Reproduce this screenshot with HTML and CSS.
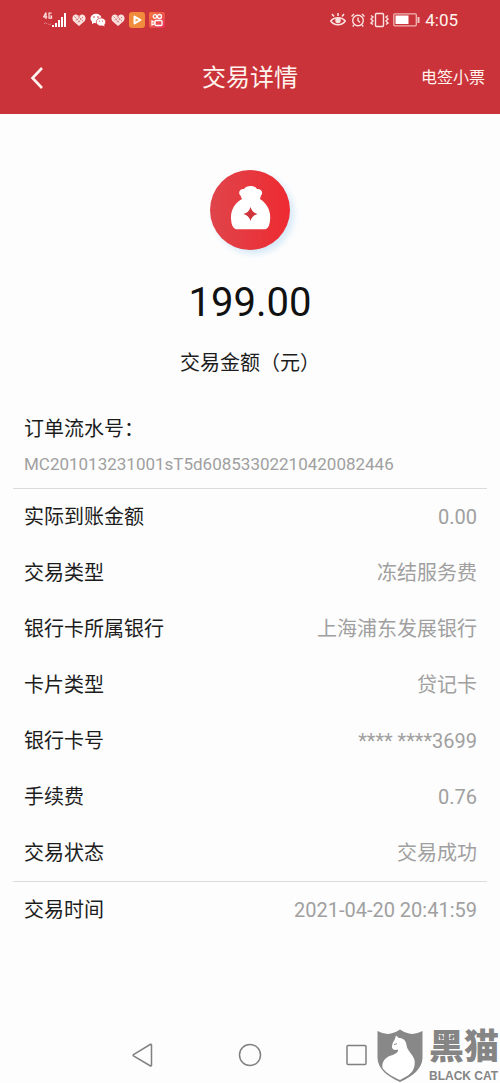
FILE: index.html
```html
<!DOCTYPE html>
<html lang="zh-CN">
<head>
<meta charset="utf-8">
<meta name="viewport" content="width=device-width, initial-scale=1">
<title>交易详情</title>
<link rel="stylesheet" href="styles.css">
</head>
<body>
<div class="screen">
  <header class="top">
    <div class="status">
      <div class="status-left">
        <svg width="24" height="16" viewBox="0 0 24 16" aria-hidden="true">
          <g fill="none" stroke="#fbe3e0" stroke-width="1.200"><path d="M3 .5v6.500M3 .5L.7 4.800H4.200M8.500 1.200H6v5h2.500V4H7.200"/><path d="M1 12l1.500-1.500L4 12M5 11.500L6.500 13 8 11.500" stroke="#e07f80" stroke-width="1"/></g>
          <g fill="#fff"><path d="M9 13h2v2H9zM12 11h2v4h-2zM15 8h2v7h-2zM18 5h2v10h-2zM21 1h2v14h-2z"/></g>
        </svg>
        <svg class="heart" width="14" height="14" viewBox="0 0 14 14" aria-hidden="true"><path d="M7 13L1.200 8C-.8 4.500 1.500 1 4.500 1.500L7 3 9.500 1.500C12.500 1 14.800 4.500 12.800 8z" fill="#fae3df"/><path d="M2.500 3.500l6 6.500M6 3.200l5 5M8 3.500L3.500 8M11 4L5.500 10" stroke="#c4545a" stroke-width=".8" stroke-dasharray="1.800 1" fill="none"/></svg>
        <svg width="16" height="14" viewBox="0 0 16 14" aria-hidden="true"><g fill="#fff"><ellipse cx="6" cy="5.500" rx="5.500" ry="4.700"/><path d="M2 8l0 3 3-1.500z"/><ellipse cx="11" cy="9" rx="4.700" ry="4" stroke="#cb333b" stroke-width=".7"/><path d="M12 12l2.500 1.500-.3-2.500z"/></g><g fill="#cb333b"><circle cx="4" cy="4" r=".8"/><circle cx="8" cy="4" r=".8"/><circle cx="9.500" cy="8" r=".6"/><circle cx="12.500" cy="8" r=".6"/></g></svg>
        <svg class="heart" width="14" height="14" viewBox="0 0 14 14" aria-hidden="true"><path d="M7 13L1.200 8C-.8 4.500 1.500 1 4.500 1.500L7 3 9.500 1.500C12.500 1 14.800 4.500 12.800 8z" fill="#fae3df"/><path d="M2.500 3.500l6 6.500M6 3.200l5 5M8 3.500L3.500 8M11 4L5.500 10" stroke="#c4545a" stroke-width=".8" stroke-dasharray="1.800 1" fill="none"/></svg>
        <svg width="16" height="16" viewBox="0 0 16 16" aria-hidden="true"><rect width="16" height="16" rx="3" fill="#f08c3c"/><path d="M5.500 4.500v7l6-3.500z" fill="#f5a860" stroke="#fff" stroke-width="2" stroke-linejoin="round"/></svg>
        <svg width="16" height="16" viewBox="0 0 16 16" aria-hidden="true"><defs><linearGradient id="vid" x1="0" x2="1" y1="0" y2="1"><stop offset="0" stop-color="#f47a3c"/><stop offset="1" stop-color="#e8305a"/></linearGradient></defs><rect width="16" height="16" rx="2" fill="url(#vid)"/><g fill="none" stroke="#fff" stroke-width="1.300"><circle cx="6" cy="4.500" r="1.800"/><circle cx="10.500" cy="4.500" r="2"/><rect x="6" y="8.500" width="7" height="5" rx="1"/><path d="M6 10.500L3 9v4L6 11.500"/></g></svg>
      </div>
      <div class="status-right">
        <svg width="16" height="16" viewBox="0 0 16 16" fill="none" stroke="#fbe3e0" stroke-width="1.500" aria-hidden="true"><path d="M.8 9C4 4.500 12 4.500 15.200 9 12 14 4 14 .8 9z"/><circle cx="8" cy="8.500" r="2" fill="#fbe3e0"/><path d="M8 4V1M4 4.500L2 2M12 4.500L14 2"/></svg>
        <svg width="16" height="16" viewBox="0 0 16 16" fill="none" stroke="#fbe3e0" stroke-width="1.400" aria-hidden="true"><circle cx="8" cy="8.500" r="5.300"/><path d="M8 5.500v3l2 2M1.500 4.500L4 2M14.500 4.500L12 2M4 13l-1.300 1.500M12 13l1.300 1.500"/></svg>
        <svg width="19" height="16" viewBox="0 0 19 16" fill="none" stroke="#fbe3e0" stroke-width="1.400" aria-hidden="true"><rect x="5.500" y="1.500" width="8" height="13" rx="1"/><path d="M1 3.500l2 1.500-2 2 2 2-2 2 2 1.500M18 3.500L16 5l2 2-2 2 2 2-2 1.500"/></svg>
        <svg width="27" height="14" viewBox="0 0 27 14" aria-hidden="true"><rect x=".8" y=".8" width="22.500" height="12" rx="1" fill="none" stroke="#f0b5b3" stroke-width="1.300"/><path d="M2.500 2.500h13v8.500h-13z" fill="#fff"/><path d="M24.500 4h2v6h-2z" fill="#f0c5c3"/></svg>
        <span class="clock">4:05</span>
      </div>
    </div>
    <nav class="titlebar">
      <button class="back" type="button" aria-label="返回"><svg width="14" height="22" viewBox="0 0 14 22" aria-hidden="true"><path d="M12 1L2.500 11 12 21" fill="none" stroke="#fff5ee" stroke-width="2.600"/></svg></button>
      <h1 class="title">交易详情</h1>
      <a class="receipt" href="#">电签小票</a>
    </nav>
  </header>

  <main class="content">
    <section class="summary">
      <svg width="100" height="100" viewBox="0 0 100 100" aria-hidden="true">
        <defs><linearGradient id="disc" x1="0" x2="1"><stop offset="0" stop-color="#df454b"/><stop offset="1" stop-color="#ee2a31"/></linearGradient><filter id="soft" x="-20%" y="-20%" width="140%" height="140%"><feGaussianBlur stdDeviation="3"/></filter></defs>
        <circle cx="54" cy="54" r="40" fill="#d5e9f7" filter="url(#soft)"/>
        <circle cx="50" cy="50" r="40" fill="url(#disc)"/>
        <path d="M42 39Q41 37 40.500 35.500C38 33.500 39 28.500 44 29 46 25 55 25 57 29 62 28.500 63.500 33.500 61 35.500Q60.500 37 60 39C66.500 43 70.500 50 70.200 58Q70 68 65.500 69.300H36Q31.500 68 31 59C30.500 50 35 43 42 39z" fill="#fff"/>
        <path d="M50.500 47Q52 52.500 57.500 54 52 55.500 50.500 61 49 55.500 43.500 54 49 52.500 50.500 47z" fill="#cf343b"/>
      </svg>
      <p class="amount">199.00</p>
      <p class="caption">交易金额（元）</p>
    </section>

    <dl class="order">
      <dt>订单流水号：</dt>
      <dd>MC201013231001sT5d60853302210420082446</dd>
    </dl>
    <dl class="rows">
      <div class="row"><dt>实际到账金额</dt><dd>0.00</dd></div>
      <div class="row"><dt>交易类型</dt><dd>冻结服务费</dd></div>
      <div class="row"><dt>银行卡所属银行</dt><dd>上海浦东发展银行</dd></div>
      <div class="row"><dt>卡片类型</dt><dd>贷记卡</dd></div>
      <div class="row"><dt>银行卡号</dt><dd>**** ****3699</dd></div>
      <div class="row"><dt>手续费</dt><dd>0.76</dd></div>
      <div class="row"><dt>交易状态</dt><dd>交易成功</dd></div>
    </dl>
    <dl class="rows">
      <div class="row"><dt>交易时间</dt><dd>2021-04-20 20:41:59</dd></div>
    </dl>
  </main>

  <footer class="softkeys">
    <button type="button" aria-label="返回键"><svg width="24" height="24" viewBox="0 0 24 24"><path d="M20.500 2v20.500a.8.8 0 0 1-1 .5L2.500 13a1 1 0 0 1 0-1.500L19.500 1.300a.8.8 0 0 1 1 .7z"/></svg></button>
    <button type="button" aria-label="主页"><svg width="24" height="24" viewBox="0 0 24 24"><circle cx="12" cy="12" r="10.500"/></svg></button>
    <button type="button" aria-label="最近任务"><svg width="24" height="24" viewBox="0 0 24 24"><rect x="2" y="2.500" width="19" height="19" rx="1"/></svg></button>
  </footer>

  <div class="watermark">
    <svg width="46" height="54" viewBox="0 0 46 54" aria-hidden="true">
      <path d="M.5 2Q8 6 14 4.500 19 3.500 23 .5 27 3.500 32 4.500 38 6 45.500 2V29C45 40 36 47 23 53 10 47 1 40 .5 29z" fill="#888"/>
      <path d="M17.500 11L19 6.500 22 9C26 9 29 11.500 29.500 16 30 22 36 25 37.500 31 38.500 38 36 43 31 46.500L23 51C15 47.500 9 44 5.500 39 4.500 33 8 28.500 14 26.500 19 25 21.500 23 21 20.500 19 21.500 15.500 21 15 18.500 15 15 16 13 17.500 11z" fill="#fff"/>
      <path d="M17 15.500l3-.8" stroke="#888" stroke-width="1"/>
    </svg>
    <div class="wordmark"><span class="wm-cn">黑猫</span><span class="wm-en">BLACK CAT</span></div>
  </div>
</div>
</body>
</html>
```
FILE: styles.css
```css
* { box-sizing: border-box; }
body {
  margin: 0;
  background: #fdfdfd;
  color: #1c1c1c;
  font-family: Roboto, "Noto Sans CJK SC", sans-serif;
  font-size: 20px;
  line-height: 24px;
}
h1, p, dl, dd { margin: 0; font-weight: 400; }
svg { display: block; flex: none; }
button { border: 0; padding: 0; background: none; }
.screen {
  position: relative;
  display: flex;
  flex-direction: column;
  min-height: 100vh;
}
.top { background: #cb333b; color: #fff5ee; }
.status {
  display: flex;
  justify-content: space-between;
  height: 40px;
  padding: 0 42px 0 43px;
}
.status-left, .status-right { display: flex; align-items: center; }
.status-left { gap: 4px; }
.status-left .heart { margin-left: 1px; }
.status-right { gap: 4px; }
.clock { font-size: 17px; margin-left: 1px; }
.titlebar {
  display: grid;
  grid-template-columns: 1fr auto 1fr;
  align-items: center;
  height: 74px;
  padding: 2px 15px 0;
}
.back { justify-self: start; padding: 0 15px; }
.title { font-size: 24px; line-height: 32px; }
.receipt {
  justify-self: end;
  color: inherit;
  font-size: 16px;
  text-decoration: none;
}
.content { flex: 1; padding: 0 13px; }
.summary {
  display: flex;
  flex-direction: column;
  align-items: center;
  padding-top: 46px;
}
.amount {
  margin-top: 19px;
  color: #111;
  font-size: 40px;
  line-height: 48px;
}
.caption { margin-top: 24px; }
.order { padding: 42px 11px 12px; }
.order dd {
  margin-top: 11px;
  color: #a0a0a0;
  font-size: 17px;
}
.rows { border-top: 1px solid #dcdcdc; }
.row {
  display: flex;
  align-items: center;
  justify-content: space-between;
  height: 56px;
  padding: 0 10px 0 11px;
}
.row dd { color: #a0a0a0; }
.softkeys {
  display: grid;
  grid-template-columns: repeat(3, 107px);
  justify-content: center;
  align-items: center;
  height: 56px;
}
.softkeys button { justify-self: center; }
.softkeys svg { fill: none; stroke: #808080; stroke-width: 1.5; }
.watermark {
  position: absolute;
  right: 1px;
  bottom: 0;
  display: flex;
  align-items: flex-end;
  gap: 6px;
  color: #858585;
}
.wordmark { display: flex; flex-direction: column; }
.wm-cn {
  font-size: 35px;
  font-weight: 900;
  line-height: 42px;
}
.wm-en {
  font: bold 12px/14px "Liberation Sans", sans-serif;
  white-space: nowrap;
}
```
